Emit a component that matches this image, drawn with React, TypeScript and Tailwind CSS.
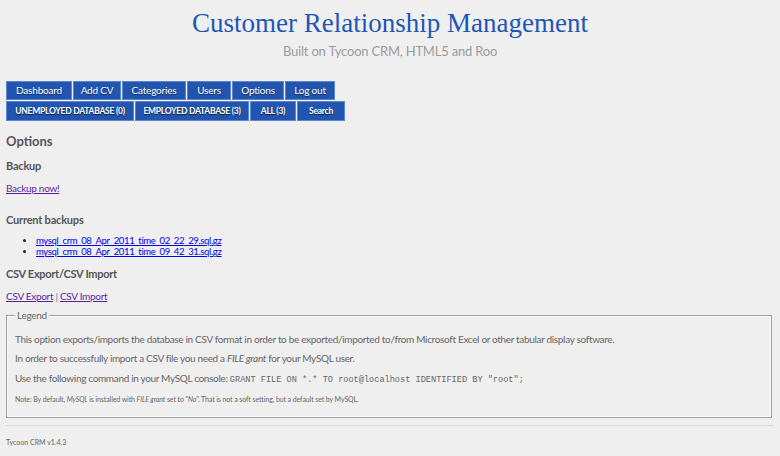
import React from "react";

const sans = { fontFamily: "Lato, 'Open Sans', sans-serif" };

export default function App() {
  const nav1: [string, string][] = [
    ["Dashboard", "w-[66px]"],
    ["Add CV", "w-[48px]"],
    ["Categories", "w-[64px]"],
    ["Users", "w-[44px]"],
    ["Options", "w-[52px]"],
    ["Log out", "w-[50px]"],
  ];
  const nav2: [string, string][] = [
    ["UNEMPLOYED DATABASE (0)", "w-[128px]"],
    ["EMPLOYED DATABASE (3)", "w-[114px]"],
    ["ALL (3)", "w-[46px]"],
    ["Search", "w-[48px]"],
  ];
  return (
    <div className="min-h-[456px] w-full bg-[#efefef] px-[6px] text-[#555]" style={sans}>
      <header className="flex flex-col items-center pt-[7px]">
        <h1 className="text-[27px] leading-[32px] text-[#1f56b5]" style={{ fontFamily: "'Liberation Serif', serif" }}>
          Customer Relationship Management
        </h1>
        <p className="mt-[3px] text-[13px] leading-[18px] tracking-[-0.2px] text-[#9b9b9b]">Built on Tycoon CRM, HTML5 and Roo</p>
      </header>

      <nav className="mt-[21px] flex flex-col gap-[1px]">
        <div className="flex gap-[1px]">
          {nav1.map(([n, w]) => (
            <a key={n} className={`flex h-[19px] items-center justify-center border border-[#5d86cf] bg-[#2155b0] text-[10px] tracking-[-0.2px] text-white [text-shadow:0_1px_1px_rgba(0,0,0,0.5)] ${w}`}>
              {n}
            </a>
          ))}
        </div>
        <div className="flex gap-[1px]">
          {nav2.map(([n, w]) => (
            <a key={n} className={`flex h-[20px] items-center justify-center border border-[#5d86cf] bg-[#2155b0] text-[8.5px] font-bold tracking-[-0.25px] text-white [text-shadow:0_1px_1px_rgba(0,0,0,0.7)] ${w}`}>
              {n}
            </a>
          ))}
        </div>
      </nav>

      <h2 className="mt-[12px] text-[13px] font-bold leading-[16px] text-[#555]">Options</h2>
      <h3 className="mt-[10px] text-[11px] font-bold leading-[14px] tracking-[-0.2px] text-[#555]">Backup</h3>
      <a className="mt-[9px] block text-[10px] leading-[13px] tracking-[-0.3px] text-[#5b1f9e] underline">Backup now!</a>

      <h3 className="mt-[18px] text-[11px] font-bold leading-[14px] tracking-[-0.2px] text-[#555]">Current backups</h3>
      <ul className="mt-[8px] list-disc pl-[30px] text-[9.5px] leading-[11px] tracking-[-0.35px] text-[#222]">
        <li><a className="text-[#0000ee] underline">mysql_crm_08_Apr_2011_time_02_22_29.sql.gz</a></li>
        <li><a className="text-[#0000ee] underline">mysql_crm_08_Apr_2011_time_09_42_31.sql.gz</a></li>
      </ul>

      <h3 className="mt-[10px] text-[11px] font-bold leading-[14px] tracking-[-0.3px] text-[#555]">CSV Export/CSV Import</h3>
      <p className="mt-[9px] text-[10px] leading-[13px] tracking-[-0.3px] text-[#777]">
        <a className="text-[#5b1f9e] underline">CSV Export</a> | <a className="text-[#5b1f9e] underline">CSV Import</a>
      </p>

      <fieldset className="mr-[2px] mt-[6px] border border-[#a0a0a0] px-[8px] pb-[13px] pt-[2px] shadow-[inset_0_0_0_1px_#fafafa]">
        <legend className="px-[2px] text-[10px] leading-[12px] tracking-[-0.3px] text-[#666]">Legend</legend>
        <p className="mt-[10px] text-[10px] leading-[13px] tracking-[-0.33px] text-[#666]">
          This option exports/imports the database in CSV format in order to be exported/imported to/from Microsoft Excel or other tabular display software.
        </p>
        <p className="mt-[6px] text-[10px] leading-[13px] tracking-[-0.33px] text-[#666]">
          In order to successfully import a CSV file you need a <em>FILE grant</em> for your MySQL user.
        </p>
        <p className="mt-[7px] text-[10px] leading-[13px] tracking-[-0.33px] text-[#666]">
          Use the following command in your MySQL console:{" "}
          <code className="text-[8.6px] tracking-normal" style={{ fontFamily: "'Liberation Mono', monospace" }}>
            GRANT FILE ON *.* TO root@localhost IDENTIFIED BY "root";
          </code>
        </p>
        <p className="mt-[7px] text-[7px] leading-[10px] tracking-[-0.1px] text-[#666]">
          Note: By default, <em>MySQL</em> is installed with <em>FILE grant</em> set to "<em>No</em>". That is not a soft setting, but a default set by MySQL.
        </p>
      </fieldset>

      <hr className="mt-[7px] border-t border-[#dcdcdc]" />
      <p className="pb-[8px] pt-[11px] text-[7px] leading-[10px] text-[#666]">Tycoon CRM v1.4.3</p>
    </div>
  );
}
